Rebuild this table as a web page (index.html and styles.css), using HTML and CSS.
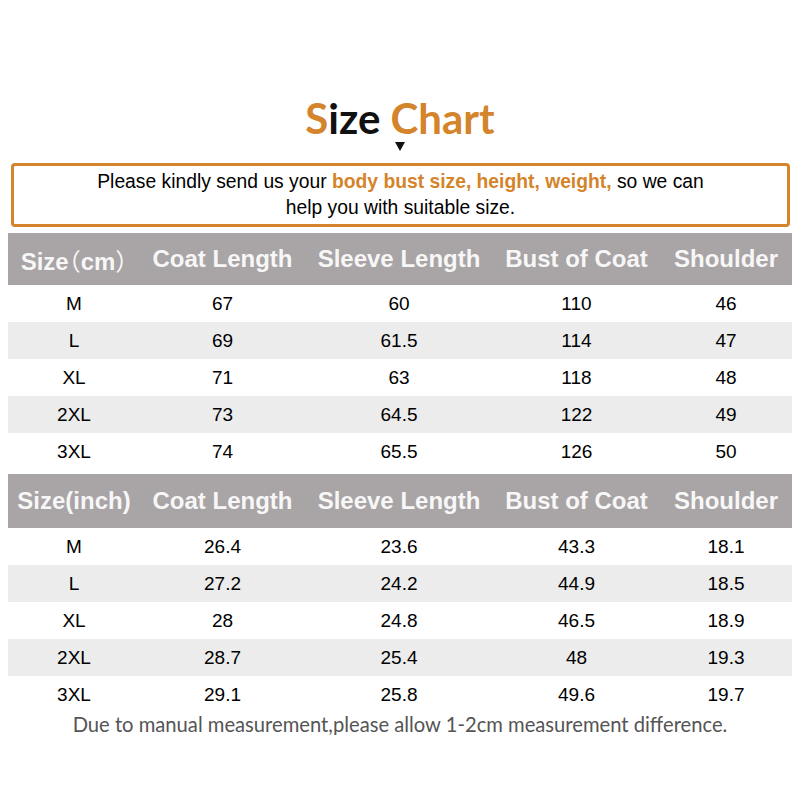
FILE: index.html
```html
<!DOCTYPE html>
<html>
<head>
<meta charset="utf-8">
<link rel="stylesheet" href="styles.css">
</head>
<body>
<div class="page">
  <h1 class="title"><span class="orange">S</span>ize <span class="orange">Chart</span></h1>
  <div class="arrow"></div>
  <div class="notice">
    <p>Please kindly send us your <b class="orange">body bust size, height, weight,</b> so we can<br>help you with suitable size.</p>
  </div>
  <table class="chart cm">
    <colgroup><col class="c1"><col class="c2"><col class="c3"><col class="c4"><col class="c5"></colgroup>
    <thead><tr><th>Size<span class="fw">（</span>cm<span class="fw">）</span></th><th>Coat Length</th><th>Sleeve Length</th><th>Bust of Coat</th><th>Shoulder</th></tr></thead>
    <tbody>
      <tr><td>M</td><td>67</td><td>60</td><td>110</td><td>46</td></tr>
      <tr><td>L</td><td>69</td><td>61.5</td><td>114</td><td>47</td></tr>
      <tr><td>XL</td><td>71</td><td>63</td><td>118</td><td>48</td></tr>
      <tr><td>2XL</td><td>73</td><td>64.5</td><td>122</td><td>49</td></tr>
      <tr><td>3XL</td><td>74</td><td>65.5</td><td>126</td><td>50</td></tr>
    </tbody>
  </table>
  <table class="chart inch">
    <colgroup><col class="c1"><col class="c2"><col class="c3"><col class="c4"><col class="c5"></colgroup>
    <thead><tr><th>Size(inch)</th><th>Coat Length</th><th>Sleeve Length</th><th>Bust of Coat</th><th>Shoulder</th></tr></thead>
    <tbody>
      <tr><td>M</td><td>26.4</td><td>23.6</td><td>43.3</td><td>18.1</td></tr>
      <tr><td>L</td><td>27.2</td><td>24.2</td><td>44.9</td><td>18.5</td></tr>
      <tr><td>XL</td><td>28</td><td>24.8</td><td>46.5</td><td>18.9</td></tr>
      <tr><td>2XL</td><td>28.7</td><td>25.4</td><td>48</td><td>19.3</td></tr>
      <tr><td>3XL</td><td>29.1</td><td>25.8</td><td>49.6</td><td>19.7</td></tr>
    </tbody>
  </table>
  <p class="footnote">Due to manual measurement,please allow 1-2cm measurement difference.</p>
</div>
</body>
</html>
```
FILE: styles.css
```css
html, body {
  margin: 0;
  padding: 0;
  background: #ffffff;
}
.page {
  width: 800px;
  padding-top: 94px;
  font-family: "Liberation Sans", Arial, sans-serif;
  color: #000;
}
.orange {
  color: #d4842a;
}
.title {
  margin: 0;
  text-align: center;
  font-family: Lato, "Noto Sans", sans-serif;
  font-weight: 700;
  font-size: 42px;
  line-height: 48px;
  color: #111;
}
.arrow {
  width: 0;
  height: 0;
  margin: 0 auto;
  border-left: 5px solid transparent;
  border-right: 5px solid transparent;
  border-top: 9px solid #111;
}
.notice {
  margin: 12px 10px 0 11px;
  height: 58px;
  border: 3px solid #d4842a;
  border-radius: 4px;
  display: flex;
  align-items: center;
  justify-content: center;
}
.notice p {
  margin: 0;
  text-align: center;
  font-size: 19.3px;
  line-height: 26px;
}
.notice b {
  font-weight: 700;
}
.chart {
  width: 784px;
  margin: 0 8px;
  border-collapse: collapse;
  table-layout: fixed;
}
.chart.cm {
  margin-top: 6px;
}
.chart.inch {
  margin-top: 4px;
}
.c1 { width: 132px; }
.c2 { width: 165px; }
.c3 { width: 188px; }
.c4 { width: 167px; }
.c5 { width: 132px; }
.chart th {
  background: #a9a4a5;
  color: #f7f7f7;
  font-size: 24px;
  font-weight: 700;
  height: 52px;
  padding: 0;
  white-space: nowrap;
}
.chart th .fw {
  font-family: "Noto Sans CJK SC", sans-serif;
  font-weight: 400;
  font-feature-settings: "halt" 1;
}
.chart.inch th {
  height: 54px;
}
.chart td {
  height: 37px;
  padding: 0;
  text-align: center;
  font-size: 19px;
}
.chart tbody tr:nth-child(even) td {
  background: #ececec;
}
.footnote {
  margin: 0;
  text-align: center;
  font-family: Lato, "Noto Sans", sans-serif;
  font-size: 20.2px;
  line-height: 22px;
  color: #555;
}
```
